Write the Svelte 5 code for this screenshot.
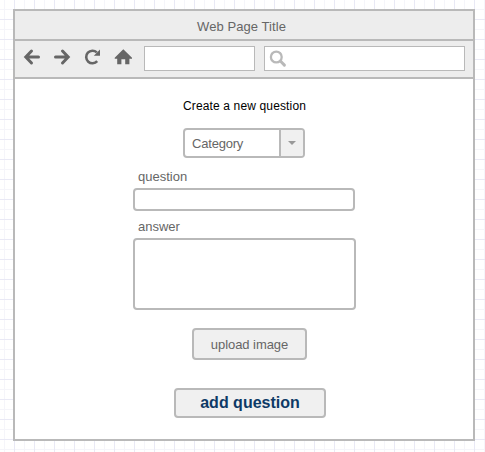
<script>
  let question = $state('');
  let answer = $state('');
  let address = $state('');
  let search = $state('');
</script>

<main>
  <section class="window">
    <header><span class="title">Web Page Title</span></header>
    <nav>
      <svg class="icons" width="129" height="36" viewBox="15 41 129 36" fill="none" stroke="#666">
        <g stroke-width="3" stroke-linecap="round">
          <path d="M38.5 57H27M31.5 51L25.8 57L31.5 63" />
          <path d="M55.5 57H67M62.5 51L68.2 57L62.5 63" />
        </g>
        <path d="M97.2 61.2A6.3 6.3 0 1 1 96.8 52.4" stroke-width="2.6" />
        <path d="M100 49.6V55.8H93.8Z" fill="#666" stroke="none" />
        <path d="M123.3 49.3L132 57.7V58.7H129.4V64.3H125.2V59.3H121.4V64.3H117.2V58.7H114.7V57.7Z" fill="#666" stroke="none" />
      </svg>
      <input class="address" aria-label="Address" bind:value={address} />
      <div class="search">
        <svg width="20" height="20" viewBox="0 0 20 20" fill="none" stroke="#b9b9b9">
          <circle cx="7.3" cy="8" r="5.4" stroke-width="2.3" />
          <path d="M11.6 12.3L15.4 16.1" stroke-width="3" stroke-linecap="round" />
        </svg>
        <input aria-label="Search" bind:value={search} />
      </div>
    </nav>
    <form onsubmit={(e) => e.preventDefault()}>
      <h1><span>Create a new question</span></h1>
      <button type="button" class="select">
        <span class="value"><span class="category">Category</span></span>
        <span class="arrow">
          <svg width="8" height="4" viewBox="0 0 8 4"><path d="M0 0H8L4 4Z" fill="#999" /></svg>
        </span>
      </button>
      <label for="question">question</label>
      <input id="question" bind:value={question} />
      <label class="second" for="answer">answer</label>
      <textarea id="answer" bind:value={answer}></textarea>
      <button type="button" class="upload">upload image</button>
      <button class="add">add question</button>
    </form>
  </section>
</main>

<style>
  :global(body) {
    margin: 0;
  }
  main, main * {
    box-sizing: border-box;
  }
  main {
    width: 485px;
    height: 452px;
    padding: 9px 10px 11px 13px;
    overflow: hidden;
    font-family: "Liberation Sans", Arial, sans-serif;
    font-size: 13px;
    color: #666;
    background-color: #fff;
    background-image:
      linear-gradient(90deg, #e9e9f5 1px, transparent 1px),
      linear-gradient(#e9e9f5 1px, transparent 1px),
      linear-gradient(90deg, #f5f5fa 1px, transparent 1px),
      linear-gradient(#f5f5fa 1px, transparent 1px);
    background-size: 20px 20px;
    background-position: 14px 0, 0 19px, 4px 0, 0 9px;
  }
  .window {
    width: 462px;
    height: 432px;
    border: 2px solid #b9b9b9;
    background: #fff;
  }
  header {
    height: 30px;
    display: flex;
    align-items: center;
    justify-content: center;
    padding-right: 5px;
    padding-top: 2px;
    background: #ededed;
    border-bottom: 2px solid #b9b9b9;
  }
  .title {
    letter-spacing: 0.07px;
  }
  nav {
    height: 38px;
    display: flex;
    background: #ededed;
    border-bottom: 2px solid #b9b9b9;
  }
  .icons {
    flex: none;
  }
  input, textarea, button {
    display: block;
    margin: 0;
    padding: 0 6px;
    font: inherit;
    color: inherit;
    outline: none;
  }
  .address, .search {
    height: 25px;
    margin-top: 5px;
    border: 1px solid #b9b9b9;
    background: #fff;
  }
  .address {
    width: 111px;
    border-radius: 0;
  }
  .search {
    width: 201px;
    margin-left: 9px;
    display: flex;
    padding: 2px 0 0 4px;
  }
  .search svg {
    flex: none;
  }
  .search input {
    flex: 1;
    min-width: 0;
    height: 20px;
    border: 0;
    background: transparent;
  }
  form {
    padding-left: 118px;
    display: flex;
    flex-direction: column;
    align-items: flex-start;
  }
  h1 {
    margin: 20px 0 0 50px;
    font-size: 12px;
    line-height: 14px;
    font-weight: 400;
    letter-spacing: 0.14px;
    color: #000;
  }
  .select, #question, #answer, .upload, .add {
    border: 2px solid #b9b9b9;
    border-radius: 4px;
  }
  .select {
    width: 122px;
    height: 30px;
    margin: 15px 0 0 50px;
    padding: 0;
    display: flex;
    background: #fff;
    overflow: hidden;
  }
  .value {
    width: 94px;
    height: 26px;
    padding-left: 7px;
    text-align: left;
    line-height: 27px;
    letter-spacing: -0.2px;
  }
  .arrow {
    flex: 1;
    height: 26px;
    display: flex;
    align-items: center;
    justify-content: center;
    border-left: 2px solid #b9b9b9;
    background: #f0f0f0;
  }
  label {
    margin: 11px 0 0 5px;
    line-height: 15px;
  }
  #question {
    width: 222px;
    height: 23px;
    margin-top: 4px;
    background: #fff;
  }
  .second {
    margin-top: 8px;
  }
  #answer {
    width: 223px;
    height: 72px;
    margin-top: 4px;
    resize: none;
    background: #fff;
  }
  .upload, .add {
    padding: 0;
    background: #f0f0f0;
  }
  .upload {
    width: 115px;
    height: 32px;
    margin: 18px 0 0 59px;
    letter-spacing: -0.05px;
  }
  .add {
    width: 152px;
    height: 30px;
    margin: 28px 0 0 41px;
    font-size: 16px;
    font-weight: 700;
    color: #0d3a66;
    line-height: 26px;
  }
</style>
